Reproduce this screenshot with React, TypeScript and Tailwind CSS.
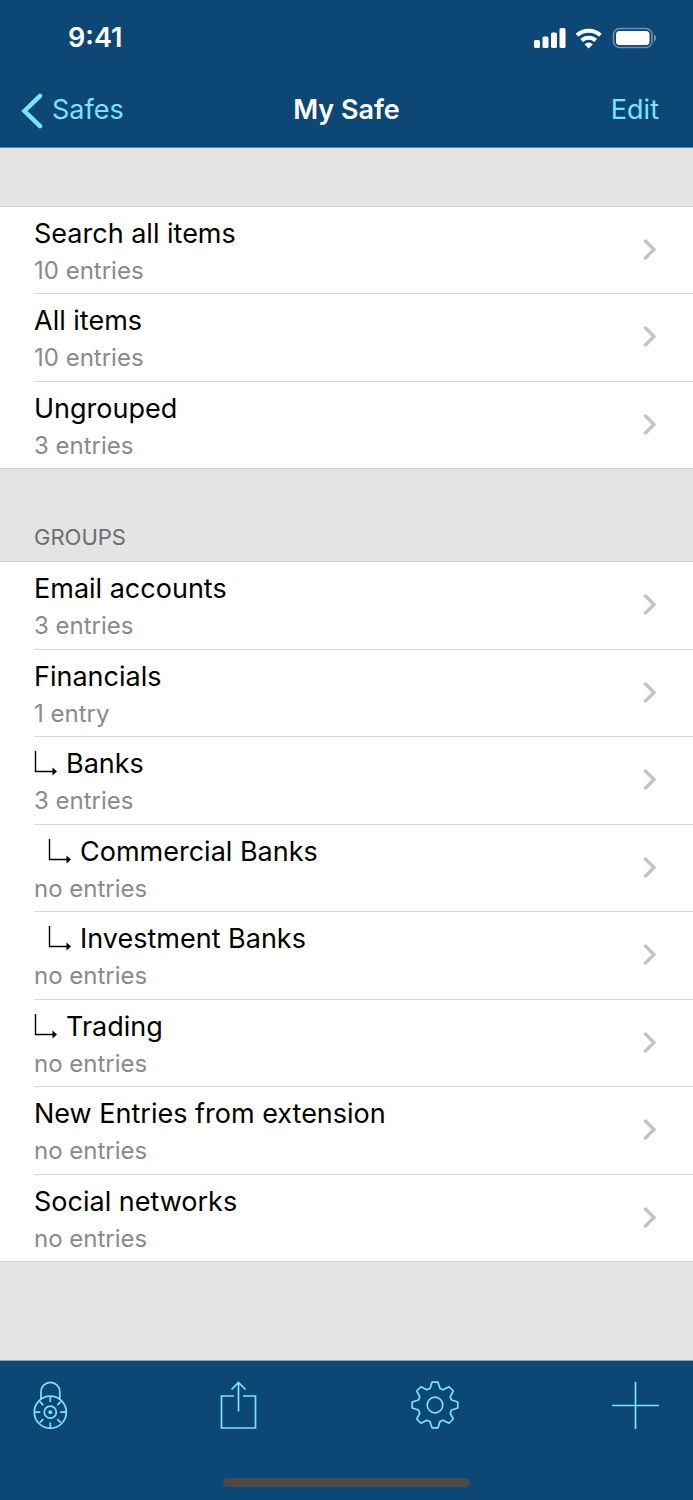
import React from "react";

type Item = { name: string; detail: string; depth?: number };

const overview: Item[] = [
  { name: "Search all items", detail: "10 entries" },
  { name: "All items", detail: "10 entries" },
  { name: "Ungrouped", detail: "3 entries" },
];

const groups: Item[] = [
  { name: "Email accounts", detail: "3 entries" },
  { name: "Financials", detail: "1 entry" },
  { name: "Banks", detail: "3 entries", depth: 1 },
  { name: "Commercial Banks", detail: "no entries", depth: 2 },
  { name: "Investment Banks", detail: "no entries", depth: 2 },
  { name: "Trading", detail: "no entries", depth: 1 },
  { name: "New Entries from extension", detail: "no entries" },
  { name: "Social networks", detail: "no entries" },
];

// One tooth of the gear, repeated every 45 degrees around the centre.
const tooth = [
  [-5, -16.5],
  [-3, -22.8],
  [3, -22.8],
  [5, -16.5],
];

const gearPath =
  Array.from({ length: 8 }, (_, i) => {
    const a = (i * Math.PI) / 4;
    return tooth
      .map(([x, y], j) => {
        const px = 24 + x * Math.cos(a) - y * Math.sin(a);
        const py = 24 + x * Math.sin(a) + y * Math.cos(a);
        return `${i === 0 && j === 0 ? "M" : "L"}${px.toFixed(2)} ${py.toFixed(2)}`;
      })
      .join("");
  }).join("") + "Z";

function StatusIcons() {
  return (
    <svg width="124" height="24" viewBox="0 0 124 24" fill="#fff" aria-hidden="true">
      <rect x="2" y="14" width="6" height="8" rx="1.6" />
      <rect x="10.5" y="10.5" width="6" height="11.5" rx="1.6" />
      <rect x="19" y="6.5" width="6" height="15.5" rx="1.6" />
      <rect x="27.5" y="2" width="6" height="20" rx="1.6" />
      <g fill="none" stroke="#fff" strokeWidth="4">
        <path d="M45 9.2a17.4 17.4 0 0 1 23.400 0" />
        <path d="M49.7 14.5a10.3 10.3 0 0 1 14 0" />
      </g>
      <path d="M52.500 18.2a6.300 6.300 0 0 1 8.400 0l-4.200 4.200z" />
      <rect x="81.5" y="2.500" width="38.500" height="19" rx="6" fill="none" stroke="#fff" strokeOpacity=".4" strokeWidth="1.6" />
      <rect x="84" y="5" width="33.5" height="14" rx="3.5" />
      <path d="M122 8.500c2.600 1.200 2.600 5.800 0 7z" fillOpacity=".45" />
    </svg>
  );
}

function Branch() {
  return (
    <svg className="shrink-0" width="24" height="28" viewBox="0 0 24 28" aria-hidden="true">
      <path d="M1.500 1V21.500H20" fill="none" stroke="#000" strokeWidth="1.4" />
      <path d="M18.500 17.500L23 21.500L18.500 25.500z" />
    </svg>
  );
}

function Chevron() {
  return (
    <svg className="shrink-0" width="14" height="22" viewBox="0 0 14 22" fill="none" stroke="#c4c4c7" strokeWidth="3.4" strokeLinecap="round" strokeLinejoin="miter" aria-hidden="true">
      <path d="M2.500 2L11 10.500L2.500 19" />
    </svg>
  );
}

function Row({ name, detail, depth = 0 }: Item) {
  return (
    <li className="group flex border-[#d0d0d2] pl-[34px] last:border-b">
      <a href="#" className="flex min-w-0 flex-1 items-center justify-between border-b border-[#d9d9db] pr-9 group-last:border-b-0">
        <span className="flex min-w-0 flex-col pt-[6px]">
          <span className={`flex items-center gap-2 text-[27px] leading-9 text-black ${depth === 2 ? "pl-[14px]" : ""}`}>
            {depth > 0 && <Branch />}
            {name}
          </span>
          <span className="text-[24px] leading-[38px] text-[#8a8a8e]">{detail}</span>
        </span>
        <Chevron />
      </a>
    </li>
  );
}

export default function App() {
  return (
    <div className="flex min-h-screen flex-col bg-[#e4e4e4] font-['Inter',sans-serif]">
      <header className="border-b border-[#5f7f9b] bg-[#0d4775] text-[#7de3fb]">
        <div className="flex h-[74px] items-center justify-between pl-[68px] pr-[37px] pt-[2px] text-[27px] font-semibold text-white">
          <span>9:41</span>
          <StatusIcons />
        </div>
        <nav className="grid h-[73px] grid-cols-[1fr_auto_1fr] items-center text-[27px]">
          <button type="button" className="flex items-center gap-2 justify-self-start pl-[21px]">
            <svg width="23" height="36" viewBox="0 0 23 36" fill="none" stroke="currentColor" strokeWidth="4.5" strokeLinecap="round" aria-hidden="true">
              <path d="M19 2.800L3.500 18L19 33.200" />
            </svg>
            Safes
          </button>
          <h1 className="font-semibold text-white">My Safe</h1>
          <button type="button" className="justify-self-end pr-[34px]">Edit</button>
        </nav>
      </header>

      <main className="flex-1 pt-[58px]">
        <ul className="grid min-h-[263px] auto-rows-fr border-t border-[#d0d0d2] bg-white">
          {overview.map((item) => (
            <Row key={item.name} {...item} />
          ))}
        </ul>
        <h2 className="flex h-[92px] items-end px-[34px] pb-2 text-[22px] leading-8 text-[#6d6d72]">GROUPS</h2>
        <ul className="grid min-h-[701px] auto-rows-fr border-t border-[#d0d0d2] bg-white">
          {groups.map((item) => (
            <Row key={item.name} {...item} />
          ))}
        </ul>
      </main>

      <footer className="border-t border-[#8fa3b3] bg-[#0d4775] text-[#7de3fb]">
        <div className="flex items-start justify-between pl-[33px] pr-[34px] pt-5">
          <button type="button" aria-label="Lock safe">
            <svg width="34" height="48" viewBox="0 0 34 48" fill="none" stroke="currentColor" strokeWidth="1.7">
              <circle cx="17.300" cy="31.200" r="16" />
              <path d="M8 18V10.700a9.400 9.400 0 0 1 18.800 0V18" />
              <circle cx="17.300" cy="31.200" r="6" />
              <circle cx="17.300" cy="31.200" r="1.900" fill="currentColor" stroke="none" />
              <path d="M17.300 15v6M17.300 41.500v5.500M1.300 31.200h6M27.300 31.200h6M6.800 20.700l3.500 3.500M27.800 20.700l-3.500 3.500M6.800 41.700l3.500-3.500M27.800 41.700l-3.500-3.500" />
            </svg>
          </button>
          <button type="button" aria-label="Share">
            <svg width="37" height="48" viewBox="0 0 37 48" fill="none" stroke="currentColor" strokeWidth="1.7">
              <path d="M14 15H1.500V47H35.500V15H23M18.500 30.500V2M11.500 8.500L18.500 1.500L25.500 8.500" />
            </svg>
          </button>
          <button type="button" aria-label="Settings">
            <svg width="48" height="48" viewBox="0 0 48 48" fill="none" stroke="currentColor" strokeWidth="1.7" strokeLinejoin="round">
              <path d={gearPath} />
              <circle cx="24" cy="24" r="7.8" />
            </svg>
          </button>
          <button type="button" aria-label="Add">
            <svg width="47" height="48" viewBox="0 0 47 48" fill="none" stroke="currentColor" strokeWidth="1.7">
              <path d="M23.500 1V48M0 24.500H47" />
            </svg>
          </button>
        </div>
        <div className="flex justify-center pb-[13px] pt-[49px]">
          <div className="h-[9px] w-[247px] rounded-full bg-[#4a4a4c]" />
        </div>
      </footer>
    </div>
  );
}
